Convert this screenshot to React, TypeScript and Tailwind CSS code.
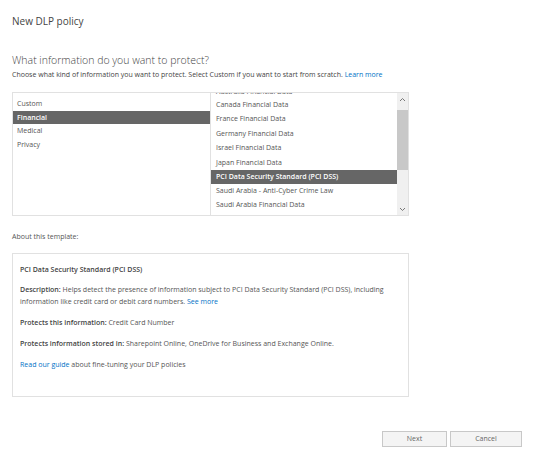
import React from 'react'

const categories = ['Custom', 'Financial', 'Medical', 'Privacy']
const templates = [
  'Canada Financial Data',
  'France Financial Data',
  'Germany Financial Data',
  'Israel Financial Data',
  'Japan Financial Data',
  'PCI Data Security Standard (PCI DSS)',
  'Saudi Arabia - Anti-Cyber Crime Law',
  'Saudi Arabia Financial Data',
]

export default function App() {
  return (
    <main className="w-[539px] h-[450px] bg-white text-[#555] font-['Open_Sans',sans-serif] overflow-hidden">
      <div className="pl-[12px] pr-[130px]">
        {/* Header */}
        <h1 className="pt-[13px] text-[10px] leading-[16px] text-[#444]">New DLP policy</h1>
        <h2 className="mt-[22px] text-[10.5px] leading-[18px] font-light text-[#444]">What information do you want to protect?</h2>
        <p className="text-[7px] leading-[12px] text-[#444] whitespace-nowrap">
          Choose what kind of information you want to protect. Select Custom if you want to start from scratch.{' '}
          <span className="text-[#0072c6]">Learn more</span>
        </p>

        {/* Lists */}
        <div className="mt-[11px] h-[124px] w-[397px] border border-[#e1e1e1] flex">
          <ul className="w-[198px] border-r border-[#e1e1e1] pt-[4px] text-[7px]">
            {categories.map((c) => (
              <li
                key={c}
                className={
                  c === 'Financial'
                    ? 'h-[13px] leading-[13px] pl-[4px] bg-[#666] text-white font-semibold'
                    : 'h-[14px] leading-[14px] pl-[4px]'
                }
              >
                {c}
              </li>
            ))}
          </ul>
          <div className="flex-1 relative overflow-hidden">
            <ul className="-mt-[7px] text-[7px]">
              <li className="h-[12px] leading-[12px] pl-[5px]">Australia Financial Data</li>
              {templates.map((t) => (
                <li
                  key={t}
                  className={
                    t.startsWith('PCI')
                      ? 'h-[14px] leading-[14px] pl-[5px] bg-[#666] text-white font-semibold'
                      : 'h-[14.4px] leading-[14.4px] pl-[5px]'
                  }
                >
                  {t}
                </li>
              ))}
            </ul>
          </div>
          <div className="w-[11px] bg-[#f0f0f0] flex flex-col items-center">
            <svg width="7" height="5" viewBox="0 0 7 5" className="mt-[4px]">
              <path d="M1 4 L3.5 1.5 L6 4" fill="none" stroke="#777" strokeWidth="1" />
            </svg>
            <div className="mt-[8px] h-[60px] w-[11px] bg-[#c8c8c8]" />
            <div className="flex-1" />
            <svg width="7" height="5" viewBox="0 0 7 5" className="mb-[3px]">
              <path d="M1 1 L3.5 3.5 L6 1" fill="none" stroke="#777" strokeWidth="1" />
            </svg>
          </div>
        </div>

        {/* About */}
        <p className="mt-[15px] text-[7px] leading-[12px] text-[#555]">About this template:</p>
        <div className="mt-[10px] h-[144px] w-[397px] border border-[#e1e1e1] pl-[7px] pt-[10px] text-[7px] leading-[12px]">
          <p className="font-semibold text-[#444]">PCI Data Security Standard (PCI DSS)</p>
          <p className="mt-[8px]">
            <span className="font-semibold text-[#444]">Description:</span> Helps detect the presence of information subject to PCI Data Security Standard (PCI DSS), including
            information like credit card or debit card numbers. <span className="text-[#0072c6]">See more</span>
          </p>
          <p className="mt-[9px]">
            <span className="font-semibold text-[#444]">Protects this information:</span> Credit Card Number
          </p>
          <p className="mt-[9px]">
            <span className="font-semibold text-[#444]">Protects information stored in:</span> Sharepoint Online, OneDrive for Business and Exchange Online.
          </p>
          <p className="mt-[9px]">
            <span className="text-[#0072c6]">Read our guide</span> about fine-tuning your DLP policies
          </p>
        </div>
      </div>

      {/* Buttons */}
      <div className="mt-[34px] flex justify-end gap-[3px] pr-[17px]">
        <button className="w-[65px] h-[16px] border border-[#c8c8c8] bg-[#f4f4f4] text-[7px] text-[#666]">Next</button>
        <button className="w-[72px] h-[16px] border border-[#c8c8c8] bg-[#f4f4f4] text-[7px] text-[#666]">Cancel</button>
      </div>
    </main>
  )
}
